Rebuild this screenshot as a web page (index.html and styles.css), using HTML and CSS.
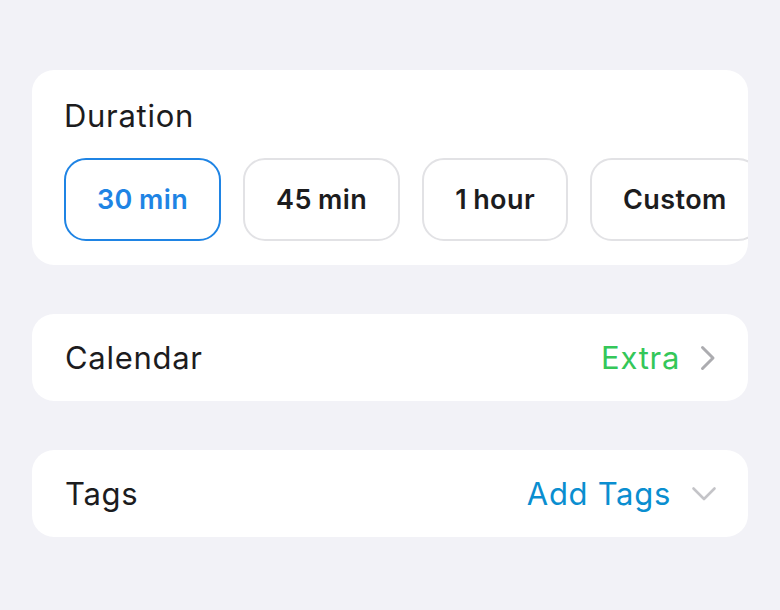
FILE: index.html
```html
<!DOCTYPE html>
<html>
<head>
<meta charset="utf-8">
<link rel="stylesheet" href="styles.css">
</head>
<body>
<main class="page">
  <section class="card duration">
    <h2 class="label">Duration</h2>
    <div class="chips">
      <button class="chip selected">30 min</button>
      <button class="chip">45 min</button>
      <button class="chip">1 hour</button>
      <button class="chip">Custom</button>
    </div>
  </section>
  <section class="card row">
    <span class="label">Calendar</span>
    <span class="value green">Extra</span>
    <svg class="chev-right" width="16" height="26" viewBox="0 0 16 26"><path d="M2.5 2.5 L13 13 L2.5 23.5" fill="none" stroke="#acacb0" stroke-width="3" stroke-linecap="round" stroke-linejoin="round"/></svg>
  </section>
  <section class="card row">
    <span class="label">Tags</span>
    <span class="value blue">Add Tags</span>
    <svg class="chev-down" width="26" height="18" viewBox="0 0 26 18"><path d="M2.5 3.5 L13 14 L23.5 3.5" fill="none" stroke="#c4c4c8" stroke-width="2.6" stroke-linecap="round" stroke-linejoin="round"/></svg>
  </section>
</main>
</body>
</html>
```
FILE: styles.css
```css
html, body {
  margin: 0;
  padding: 0;
  background: #f2f2f7;
}
body {
  font-family: Inter, "Noto Sans", "Liberation Sans", sans-serif;
  color: #1c1c1e;
  width: 780px;
  height: 610px;
  overflow: hidden;
}
.page {
  padding: 70px 32px 0 32px;
  display: flex;
  flex-direction: column;
  gap: 49px;
}
.card {
  background: #ffffff;
  border-radius: 22px;
  overflow: hidden;
}
.duration {
  height: 195px;
  box-sizing: border-box;
  padding: 26px 0 0 32px;
}
.label {
  margin: 0;
  font-size: 31px;
  font-weight: 400;
  line-height: 40px;
  letter-spacing: 0.7px;
}
.chips {
  display: flex;
  gap: 22px;
  margin-top: 22px;
}
.chip {
  flex: none;
  height: 83px;
  box-sizing: border-box;
  border: 2px solid #e2e2e5;
  border-radius: 22px;
  background: #fff;
  font-family: inherit;
  font-size: 27px;
  font-weight: 600;
  color: #1c1c1e;
  letter-spacing: 0.4px;
  word-spacing: -1px;
  padding: 0 31px;
}
.chip.selected {
  border-color: #1f84e4;
  color: #1f84e4;
}
.row {
  height: 87px;
  display: flex;
  align-items: center;
  padding: 0 32px 0 33px;
}
.row .label {
  flex: 1;
}
.value {
  font-size: 31px;
  letter-spacing: 0.7px;
}
.green { color: #34c759; }
.blue { color: #0a8ed0; }
.chev-right {
  margin-left: 20px;
}
.chev-down {
  margin-left: 20px;
  margin-right: -1px;
}
```
